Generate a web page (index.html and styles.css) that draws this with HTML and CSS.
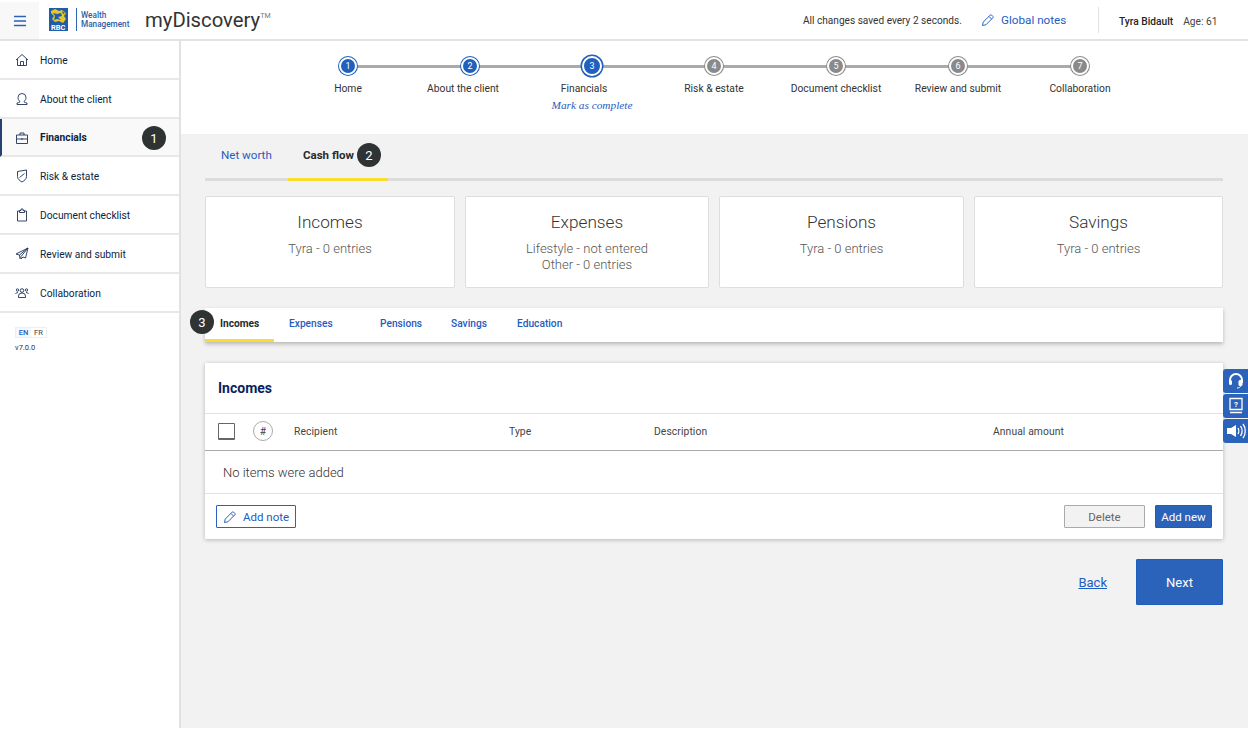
FILE: index.html
```html
<!DOCTYPE html>
<html lang="en">
<head>
    <meta charset="UTF-8">
    <title>myDiscovery</title>
    <link rel="stylesheet" href="styles.css">
</head>
<body>
    <header class="topbar">
        <button class="menu-btn" aria-label="Menu">
            <svg width="14" height="12" viewBox="0 0 14 12"><path d="M1 1.500h12M1 6h12M1 10.500h12" stroke="#2c62b8" stroke-width="1.300" fill="none"/></svg>
        </button>
        <div class="logo">
            <svg class="shield" width="21" height="23" viewBox="0 0 21 23">
                <path d="M0 0h19v23h-19z" fill="#1f5cab"/>
                <path d="M2 3l4-2 4 2 3-1 4 3-2 3 2 3-3 4-4-2-4 1-3-3 2-3-3-3z" fill="#e6c62c"/>
                <path d="M4 5l4 1 4-1 1 3-4 1 3 3-4-1-3 1 1-4zM13 3l3 2-2 1z" fill="#1f5cab"/>
            </svg>
            <span class="rbc">RBC</span>
            <span class="logo-line"></span>
            <span class="wm">Wealth<br>Management</span>
        </div>
        <div class="brand">myDiscovery<sup>TM</sup></div>
        <div class="saved">All changes saved every 2 seconds.</div>
        <a class="global-notes">
            <svg width="14" height="14" viewBox="0 0 14 14"><path d="M1.500 12.500l.7-3.400 7-7a1 1 0 0 1 1.400 0l1.300 1.300a1 1 0 0 1 0 1.400l-7 7zM8 3.500l2.500 2.500" stroke="#2c62b8" fill="none"/></svg>
            Global notes
        </a>
        <div class="client">
            <b>Tyra Bidault</b>
            <span>Age: 61</span>
        </div>
    </header>

    <div class="layout">
        <nav class="sidebar">
            <a class="nav-item">
                <svg viewBox="0 0 14 14"><path d="M1 7l6-5.500 6 5.500M2.500 6v6.500h9V6M5.500 12.500V8.500h3v4"/></svg>
                Home
            </a>
            <a class="nav-item">
                <svg viewBox="0 0 14 14"><path d="M5 9.500C3.500 8.500 3 7 3 5.500a4 4 0 0 1 8 0c0 1.500-.5 3-2 4 0 1 1 1 3 1.500v1.500H2V11c2-.5 3-.5 3-1.500z"/></svg>
                About the client
            </a>
            <a class="nav-item active">
                <svg viewBox="0 0 14 14"><path d="M1.500 4h11v8.500h-11zM5 4V2h4v2M1.500 8h11M6 8h2"/></svg>
                Financials
                <span class="badge badge-nav">1</span>
            </a>
            <a class="nav-item">
                <svg viewBox="0 0 14 14"><path d="M2.500 2.500l9-1.500v6.500c0 2.500-2 4-4.500 5.500-2.500-1.500-4.500-3-4.500-5.500zM4.500 8.500l5-4"/></svg>
                Risk &amp; estate
            </a>
            <a class="nav-item">
                <svg viewBox="0 0 14 14"><path d="M4.500 3h-2v10h9V3h-2M4.500 4.500V2.500h1.500V1h2v1.500h1.500v2z"/></svg>
                Document checklist
            </a>
            <a class="nav-item">
                <svg viewBox="0 0 14 14"><path d="M13 1L1 7l3.500 1L13 1 6 9.500V12l2-2 2.500 1zM4.500 8L5 12"/></svg>
                Review and submit
            </a>
            <a class="nav-item">
                <svg viewBox="0 0 14 14"><circle cx="7" cy="4.500" r="1.800"/><circle cx="2.500" cy="4" r="1.200"/><circle cx="11.500" cy="4" r="1.200"/><path d="M3.500 11.500v-1.500a3.500 3 0 0 1 7 0v1.500zM.5 8a2.500 2.500 0 0 1 2.500-1.500M13.500 8a2.500 2.500 0 0 0-2.500-1.500"/></svg>
                Collaboration
            </a>
            <div class="lang">
                <span class="lang-on">EN</span><span>FR</span>
            </div>
            <div class="version">v7.0.0</div>
        </nav>

        <main class="main">
            <section class="stepper">
                <div class="step done"><i>1</i><span>Home</span></div>
                <div class="step done shift-a"><i>2</i><span>About the client</span></div>
                <div class="step current shift-b"><i>3</i><span>Financials</span><em>Mark as complete</em></div>
                <div class="step"><i>4</i><span>Risk &amp; estate</span></div>
                <div class="step"><i>5</i><span>Document checklist</span></div>
                <div class="step"><i>6</i><span>Review and submit</span></div>
                <div class="step last"><i>7</i><span>Collaboration</span></div>
            </section>

            <section class="content">
                <div class="tabs">
                    <a class="tab">Net worth</a>
                    <a class="tab tab-on">Cash flow<span class="badge badge-tab">2</span></a>
                </div>

                <div class="cards">
                    <div class="card"><h2>Incomes</h2><p>Tyra - 0 entries</p></div>
                    <div class="card"><h2>Expenses</h2><p>Lifestyle - not entered<br>Other - 0 entries</p></div>
                    <div class="card"><h2>Pensions</h2><p>Tyra - 0 entries</p></div>
                    <div class="card"><h2>Savings</h2><p>Tyra - 0 entries</p></div>
                </div>

                <div class="subtabs">
                    <span class="badge badge-sub">3</span>
                    <a class="subtab subtab-on">Incomes</a>
                    <a class="subtab w-exp">Expenses</a>
                    <a class="subtab w-pen">Pensions</a>
                    <a class="subtab w-sav">Savings</a>
                    <a class="subtab">Education</a>
                </div>

                <div class="panel">
                    <h3>Incomes</h3>
                    <div class="table-head">
                        <span class="check"></span>
                        <span class="hash">#</span>
                        <span class="col col-rec">Recipient</span>
                        <span class="col col-type">Type</span>
                        <span class="col col-desc">Description</span>
                        <span class="col">Annual amount</span>
                    </div>
                    <div class="empty">No items were added</div>
                    <div class="panel-foot">
                        <button class="btn btn-note">
                            <svg width="14" height="14" viewBox="0 0 14 14"><path d="M1.500 12.500l.7-3.400 7-7a1 1 0 0 1 1.400 0l1.300 1.300a1 1 0 0 1 0 1.400l-7 7zM8 3.500l2.500 2.500" stroke="#2c62b8" fill="none"/></svg>
                            Add note
                        </button>
                        <button class="btn btn-delete">Delete</button>
                        <button class="btn btn-add">Add new</button>
                    </div>
                </div>

                <div class="page-nav">
                    <a class="back">Back</a>
                    <button class="next">Next</button>
                </div>
            </section>
        </main>
    </div>

    <aside class="side-tools">
        <a><svg width="18" height="18" viewBox="0 0 18 18"><path d="M3 11V8a6 6 0 0 1 12 0v3" fill="none" stroke="#fff" stroke-width="2"/><rect x="2" y="8" width="3" height="5" rx="1.500" fill="#fff"/><rect x="11.500" y="8" width="4" height="6" rx="1.500" fill="#fff"/><path d="M14 13c0 2-2 3-4 3" fill="none" stroke="#fff"/></svg></a>
        <a><svg width="16" height="18" viewBox="0 0 16 18"><path d="M2 1.500h12v11H2zM2 15.500h12" fill="none" stroke="#fff" stroke-width="1.300"/><text x="8" y="10" text-anchor="middle" class="tool-q">?</text></svg></a>
        <a><svg width="20" height="16" viewBox="0 0 20 16"><path d="M1 5h4l5-3v12l-5-3H1z" fill="#fff"/><path d="M12 5c1 1.500 1 4.500 0 6M14.500 3c2 3 2 7 0 10M17 1c3 4 3 10 0 14" fill="none" stroke="#fff" stroke-width="1.300"/></svg></a>
    </aside>
</body>
</html>
```

FILE: styles.css
```css
* {
    margin: 0;
    padding: 0;
    box-sizing: border-box;
}

body {
    width: 1248px;
    height: 730px;
    overflow: hidden;
    position: relative;
    background: #fff;
    font-family: Roboto, sans-serif;
    font-size: 11px;
    color: #252525;
}

.topbar {
    display: flex;
    align-items: center;
    height: 41px;
    border-bottom: 2px solid #e2e2e2;
    background: #fff;
}

.menu-btn {
    display: flex;
    align-items: center;
    justify-content: center;
    width: 39px;
    height: 37px;
    margin-top: 2px;
    border: none;
    background: #f8f8f8;
}

.logo {
    position: relative;
    display: flex;
    align-items: center;
    margin-left: 10px;
    width: 96px;
    height: 24px;
}

.rbc {
    position: absolute;
    left: 2px;
    top: 15px;
    font-size: 7.500px;
    font-weight: 700;
    color: #fff;
}

.logo-line {
    width: 1px;
    height: 23px;
    margin-left: 6px;
    background: #2c62b8;
}

.wm {
    margin-left: 4px;
    font-size: 8.200px;
    font-weight: 500;
    line-height: 9px;
    color: #2c5ea8;
    white-space: nowrap;
}

.brand {
    font-size: 20.300px;
    color: #333;
    width: 244px;
}

.brand sup {
    font-size: 7px;
    color: #777;
    vertical-align: 9px;
    line-height: 0;
}

.saved {
    margin-left: 414px;
    padding-top: 2px;
    width: 178px;
    font-size: 10.100px;
    color: #333;
}

.global-notes {
    display: flex;
    align-items: center;
    gap: 6px;
    width: 117px;
    padding-top: 1px;
    font-size: 11.700px;
    color: #1f5cc0;
}

.client {
    display: flex;
    gap: 10px;
    height: 26px;
    align-items: center;
    padding: 3px 0 0 20px;
    border-left: 1px solid #e2e2e2;
    font-size: 10.200px;
}

.client b {
    font-weight: 500;
}

.client span {
    color: #444;
}

.layout {
    display: flex;
    height: 687px;
}

.sidebar {
    width: 181px;
    border-right: 2px solid #e2e2e2;
    background: #fff;
}

.nav-item {
    position: relative;
    display: flex;
    align-items: center;
    gap: 11px;
    height: 39px;
    padding: 1px 0 0 15px;
    border-bottom: 2px solid #e8e8e8;
    font-size: 10.250px;
    color: #0a1f44;
}

.nav-item svg {
    width: 14px;
    height: 14px;
    fill: none;
    stroke: #1d3158;
    stroke-width: 0.900;
}

.nav-item.active {
    height: 38px;
    background: #f9f9f9;
    font-weight: 700;
    border-left: 2px solid #26416f;
    padding-left: 13px;
}

.badge {
    position: absolute;
    display: flex;
    align-items: center;
    justify-content: center;
    width: 24px;
    height: 24px;
    border-radius: 50%;
    background: #2f3333;
    color: #fff;
    font-size: 13px;
    font-weight: 400;
}

.badge-nav {
    left: 140px;
    top: 7px;
}

.badge-tab {
    left: 69px;
    top: 9px;
}

.badge-sub {
    left: -15px;
    top: 2px;
}

.lang {
    display: flex;
    margin: 14px 0 0 15px;
    width: 32px;
    font-size: 7.500px;
    font-weight: 500;
    color: #666;
    border: 1px solid #eee;
}

.lang span {
    flex: 1;
    text-align: center;
    line-height: 9px;
}

.lang .lang-on {
    background: #f4f7fb;
    color: #1f5cc0;
}

.version {
    margin: 5px 0 0 15px;
    font-size: 7.500px;
    color: #333;
}

.main {
    flex: 1;
    min-width: 0;
}

.stepper {
    display: flex;
    height: 93px;
    padding: 15px 0 0 106px;
    background: #fff;
}

.step {
    position: relative;
    display: flex;
    flex-direction: column;
    align-items: center;
    width: 122px;
    font-size: 10.300px;
    color: #333;
}

.step::after {
    content: "";
    position: absolute;
    left: 61px;
    top: 9px;
    width: 122px;
    height: 3px;
    background: #aaa;
}

.step.last::after {
    display: none;
}

.step i {
    position: relative;
    z-index: 1;
    display: flex;
    align-items: center;
    justify-content: center;
    width: 18px;
    height: 18px;
    margin-top: 1px;
    border-radius: 50%;
    background: #8a8a8a;
    border: 2px solid #fff;
    box-shadow: 0 0 0 1px #8a8a8a;
    font-size: 9px;
    font-style: normal;
    color: #fff;
}

.step.done i {
    background: #2160bd;
    box-shadow: 0 0 0 1px #2160bd;
}

.step.current i {
    width: 20px;
    height: 20px;
    margin-top: 0;
    margin-bottom: -1px;
    background: #2160bd;
    box-shadow: 0 0 0 1.500px #2160bd;
}

.step span {
    margin-top: 7px;
    white-space: nowrap;
}

.step.shift-a span {
    margin-right: 14px;
}

.step.shift-b span {
    margin-right: 16px;
}

.step em {
    margin-top: 4px;
    font-family: "Liberation Serif", serif;
    font-size: 11.300px;
    color: #1f5cc0;
    white-space: nowrap;
}

.content {
    height: 594px;
    padding: 0 25px 0 24px;
    background: #f2f2f2;
}

.tabs {
    display: flex;
    height: 47px;
    border-bottom: 3px solid #dcdcdc;
}

.tab {
    position: relative;
    display: flex;
    align-items: center;
    padding: 0 15px 6px 16px;
    width: 83px;
    margin-bottom: -3px;
    font-size: 11.600px;
    color: #1f5cc0;
    white-space: nowrap;
}

.tab-on {
    width: 100px;
    padding: 0 15px 2px;
    font-size: 11.500px;
    color: #2b2b2b;
    font-weight: 700;
    border-bottom: 3px solid #fbdc30;
}

.cards {
    display: grid;
    grid-template-columns: 250px 244px 245px 249px;
    gap: 10px;
    margin-top: 15px;
}

.card {
    height: 92px;
    padding-top: 15px;
    background: #fff;
    border: 1px solid #dedede;
    border-radius: 2px;
    text-align: center;
    color: #555;
}

.card h2 {
    font-size: 17.200px;
    font-weight: 300;
    line-height: 21px;
    color: #333;
}

.card p {
    margin-top: 8px;
    font-size: 13px;
    font-weight: 300;
    line-height: 16px;
}

.subtabs {
    position: relative;
    display: flex;
    height: 34px;
    margin-top: 20px;
    background: #fff;
    box-shadow: 0 2px 4px rgba(0, 0, 0, 0.25);
}

.subtab {
    display: flex;
    align-items: center;
    padding: 0 15px 3px;
    font-size: 10.200px;
    font-weight: 500;
    color: #1f5cc0;
    white-space: nowrap;
}

.subtab-on {
    width: 69px;
    padding-bottom: 1px;
    color: #2b2b2b;
    font-weight: 700;
    border-bottom: 3px solid #fbdc30;
}

.w-exp {
    width: 91px;
}

.w-pen {
    width: 71px;
}

.w-sav {
    width: 66px;
}

.panel {
    margin-top: 21px;
    background: #fff;
    box-shadow: 0 1px 4px rgba(0, 0, 0, 0.25);
    border-radius: 1px;
}

.panel h3 {
    height: 51px;
    padding: 17px 0 0 13px;
    border-bottom: 1px solid #e2e2e2;
    font-size: 14px;
    font-weight: 700;
    color: #0a1f5c;
}

.table-head {
    display: flex;
    align-items: center;
    height: 37px;
    padding: 0 0 2px 13px;
    border-bottom: 1px solid #aaa;
    font-size: 10.300px;
    color: #444;
    letter-spacing: 0.1px;
}

.check {
    width: 17px;
    height: 17px;
    border: 1px solid #666;
    border-bottom-width: 2px;
    border-radius: 1px;
    background: #fff;
}

.hash {
    display: flex;
    align-items: center;
    justify-content: center;
    width: 20px;
    height: 20px;
    margin-left: 18px;
    border: 1px solid #aaa;
    border-radius: 50%;
}

.col-rec {
    width: 215px;
    margin-left: 21px;
}

.col-type {
    width: 145px;
}

.col-desc {
    width: 339px;
}

.empty {
    display: flex;
    align-items: center;
    height: 43px;
    padding-left: 18px;
    border-bottom: 1px solid #e2e2e2;
    font-size: 13px;
    font-weight: 300;
    color: #333;
}

.panel-foot {
    display: flex;
    align-items: center;
    height: 45px;
    padding: 0 11px;
}

.btn {
    height: 23px;
    font-family: Roboto, sans-serif;
    font-size: 11.500px;
    border-radius: 1px;
}

.btn-note {
    display: flex;
    align-items: center;
    gap: 6px;
    width: 80px;
    padding-left: 6px;
    margin-right: auto;
    background: #fff;
    border: 1px solid #2c62b8;
    color: #1f5cc0;
}

.btn-delete {
    width: 81px;
    margin-right: 10px;
    background: #f2f2f2;
    border: 1px solid #aaa;
    color: #666;
}

.btn-add {
    width: 57px;
    background: #2a63b9;
    border: 1px solid #1f5cc0;
    color: #fff;
}

.page-nav {
    display: flex;
    align-items: center;
    justify-content: flex-end;
    gap: 29px;
    margin-top: 20px;
}

.back {
    font-size: 13px;
    color: #1f5cc0;
    text-decoration: underline;
}

.next {
    width: 87px;
    height: 46px;
    background: #2a63b9;
    border: 1px solid #1f5cc0;
    border-radius: 1px;
    font-family: Roboto, sans-serif;
    font-size: 13px;
    font-weight: 400;
    color: #fff;
}

.side-tools {
    position: absolute;
    right: 0;
    top: 369px;
    display: flex;
    flex-direction: column;
    gap: 1px;
}

.side-tools a {
    display: flex;
    align-items: center;
    justify-content: center;
    width: 25px;
    height: 24px;
    background: #2a63b9;
    border-radius: 3px 0 0 3px;
}

.tool-q {
    font-family: Roboto, sans-serif;
    font-size: 8px;
    font-weight: 700;
    fill: #fff;
}
```
